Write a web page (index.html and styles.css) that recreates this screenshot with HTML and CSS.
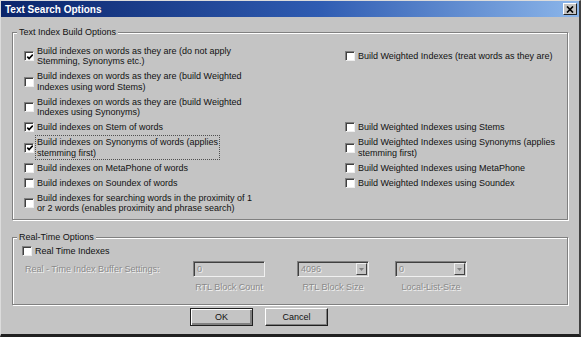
FILE: index.html
```html
<!DOCTYPE html>
<html lang="en">

<head>
    <meta charset="UTF-8">
    <title>Text Search Options</title>
    <link rel="stylesheet" href="styles.css">
</head>

<body>
    <div class="window">
        <div class="titlebar">
            <span class="title">Text Search Options</span>
            <span class="close">
                <svg width="8" height="7" viewBox="0 0 8 7">
                    <path d="M1 0.5 L7 6.5 M7 0.5 L1 6.5" stroke="#000" stroke-width="1.7" fill="none"/>
                </svg>
            </span>
        </div>

        <div class="client">
            <fieldset class="group">
                <legend>Text Index Build Options</legend>
                <div class="options">
                    <label class="opt r1 left"><span class="box checked"></span><span class="txt">Build indexes on words as they are (do not apply<br>Stemming, Synonyms etc.)</span></label>
                    <label class="opt r1 right"><span class="box"></span><span class="txt">Build Weighted Indexes (treat words as they are)</span></label>
                    <label class="opt r2 left"><span class="box"></span><span class="txt">Build indexes on words as they are (build Weighted<br>Indexes using word Stems)</span></label>
                    <label class="opt r3 left"><span class="box"></span><span class="txt">Build indexes on words as they are (build Weighted<br>Indexes using Synonyms)</span></label>
                    <label class="opt r4 left"><span class="box checked"></span><span class="txt">Build indexes on Stem of words</span></label>
                    <label class="opt r4 right"><span class="box"></span><span class="txt">Build Weighted Indexes using Stems</span></label>
                    <label class="opt r5 left"><span class="box checked"></span><span class="txt focus">Build indexes on Synonyms of words (applies<br>stemming first)</span></label>
                    <label class="opt r5 right"><span class="box"></span><span class="txt">Build Weighted Indexes using Synonyms (applies<br>stemming first)</span></label>
                    <label class="opt r6 left"><span class="box"></span><span class="txt">Build indexes on MetaPhone of words</span></label>
                    <label class="opt r6 right"><span class="box"></span><span class="txt">Build Weighted Indexes using MetaPhone</span></label>
                    <label class="opt r7 left"><span class="box"></span><span class="txt">Build indexes on Soundex of words</span></label>
                    <label class="opt r7 right"><span class="box"></span><span class="txt">Build Weighted Indexes using Soundex</span></label>
                    <label class="opt r8 left"><span class="box"></span><span class="txt">Build indexes for searching words in the proximity of 1<br>or 2 words (enables proximity and phrase search)</span></label>
                </div>
            </fieldset>

            <fieldset class="group realtime">
                <legend>Real-Time Options</legend>
                <div class="rt-body">
                    <label class="opt"><span class="box"></span><span class="txt">Real Time Indexes</span></label>
                    <div class="settings">
                        <span class="disabled setlabel">Real - Time Index Buffer Settings:</span>
                        <div class="field count">
                            <div class="edit"><span class="val">0</span></div>
                            <span class="disabled cap">RTL Block Count</span>
                        </div>
                        <div class="field size">
                            <div class="edit combo"><span class="val">4096</span><span class="drop"></span></div>
                            <span class="disabled cap">RTL Block Size</span>
                        </div>
                        <div class="field list">
                            <div class="edit combo"><span class="val">0</span><span class="drop"></span></div>
                            <span class="disabled cap">Local-List-Size</span>
                        </div>
                    </div>
                </div>
            </fieldset>

            <div class="actions">
                <button class="btn default">OK</button>
                <button class="btn">Cancel</button>
            </div>
        </div>
    </div>
</body>

</html>
```

FILE: styles.css
```css
* {
    box-sizing: border-box;
}

body {
    margin: 0;
    padding: 0;
    font-family: "Liberation Sans", Arial, sans-serif;
    font-size: 9px;
    color: #111;
}

.window {
    width: 581px;
    height: 337px;
    overflow: hidden;
    background: #c4c4c4;
    border-top: 1px solid #dcdcdc;
    border-left: 1px solid #dcdcdc;
    border-right: 2px solid #404040;
    border-bottom: 3px solid #202020;
}

.titlebar {
    height: 16px;
    display: flex;
    align-items: center;
    justify-content: space-between;
    padding: 0 2px 0 4px;
    background: linear-gradient(90deg, #0a246a, #2f5cb2 55%, #8cb6ea);
}

.title {
    color: #fff;
    font-weight: bold;
    font-size: 10px;
}

.close {
    width: 14px;
    height: 12px;
    display: flex;
    align-items: center;
    justify-content: center;
    background: #c4c4c4;
    border-top: 1px solid #fff;
    border-left: 1px solid #fff;
    border-right: 1px solid #202020;
    border-bottom: 1px solid #202020;
}

.client {
    padding: 10px 11px 0 11px;
}

.group {
    margin: 0;
    padding: 0 4px;
    min-width: 0;
    border: 1px solid #808080;
    box-shadow: 1px 1px 0 #fff, inset 1px 1px 0 #fff;
}

.group legend {
    padding: 0 2px;
    line-height: 11px;
    background: #c4c4c4;
}

.options {
    display: grid;
    grid-template-columns: 321px 1fr;
    row-gap: 4.5px;
    padding: 7.5px 0 5px 7px;
}

.opt {
    display: flex;
    align-items: center;
    line-height: 10.5px;
}

.left { grid-column: 1; }
.right { grid-column: 2; }
.r1 { grid-row: 1; }
.r2 { grid-row: 2; }
.r3 { grid-row: 3; }
.r4 { grid-row: 4; }
.r5 { grid-row: 5; }
.r6 { grid-row: 6; }
.r7 { grid-row: 7; }
.r8 { grid-row: 8; }

.box {
    flex: none;
    width: 10px;
    height: 10px;
    margin-right: 3px;
    background: #fff;
    border-top: 1px solid #808080;
    border-left: 1px solid #808080;
    border-right: 1px solid #eee;
    border-bottom: 1px solid #eee;
    box-shadow: inset 1px 1px 0 #404040;
}

.box.checked {
    background: #fff url("data:image/svg+xml,%3Csvg xmlns='http://www.w3.org/2000/svg' width='8' height='8' viewBox='0 0 8 8'%3E%3Cpath d='M1.3 3.6 L3.1 5.5 L6.8 1.6' stroke='%23000' stroke-width='1.6' fill='none'/%3E%3C/svg%3E") no-repeat 0.5px 0.5px;
}

.txt.focus {
    outline: 1px dotted #505050;
    outline-offset: 1px;
}

.realtime {
    margin-top: 12px;
}

.rt-body {
    padding: 3.5px 0 11px 5px;
}

.settings {
    display: flex;
    align-items: flex-start;
    margin-top: 4.5px;
}

.disabled {
    color: #8a8a8a;
    text-shadow: 1px 1px 0 #f4f4f4;
}

.setlabel {
    width: 171px;
    padding-left: 3px;
    line-height: 16px;
}

.field {
    width: 72px;
    display: flex;
    flex-direction: column;
    align-items: center;
}

.field.size {
    margin: 0 26px 0 32px;
}

.edit {
    width: 100%;
    height: 16px;
    display: flex;
    align-items: center;
    padding: 0 3px;
    background: #c8c8c8;
    border-top: 1px solid #808080;
    border-left: 1px solid #808080;
    border-right: 1px solid #f0f0f0;
    border-bottom: 1px solid #f0f0f0;
    box-shadow: inset 1px 1px 0 #404040;
    color: #8a8a8a;
    text-shadow: 1px 1px 0 #f0f0f0;
}

.edit .val {
    flex: 1;
}

.combo {
    padding-right: 1px;
}

.drop {
    width: 11px;
    height: 12px;
    background: #c4c4c4 url("data:image/svg+xml,%3Csvg xmlns='http://www.w3.org/2000/svg' width='5' height='3'%3E%3Cpath d='M0 0 H5 L2.5 3 Z' fill='%23808080'/%3E%3C/svg%3E") no-repeat center;
    border-top: 1px solid #f0f0f0;
    border-left: 1px solid #f0f0f0;
    border-right: 1px solid #404040;
    border-bottom: 1px solid #404040;
}

.cap {
    margin-top: 5px;
    line-height: 11px;
}

.actions {
    display: flex;
    gap: 12px;
    margin-top: 3px;
    padding-left: 178px;
}

.btn {
    width: 63px;
    height: 18px;
    padding: 0;
    font-family: inherit;
    font-size: 9px;
    color: #111;
    background: #c4c4c4;
    border-top: 1px solid #fff;
    border-left: 1px solid #fff;
    border-right: 1px solid #202020;
    border-bottom: 1px solid #202020;
    box-shadow: inset -1px -1px 0 #808080;
}

.btn.default {
    border: 1px solid #202020;
    box-shadow: inset 1px 1px 0 #fff, inset -2px -2px 0 #808080;
}
```
